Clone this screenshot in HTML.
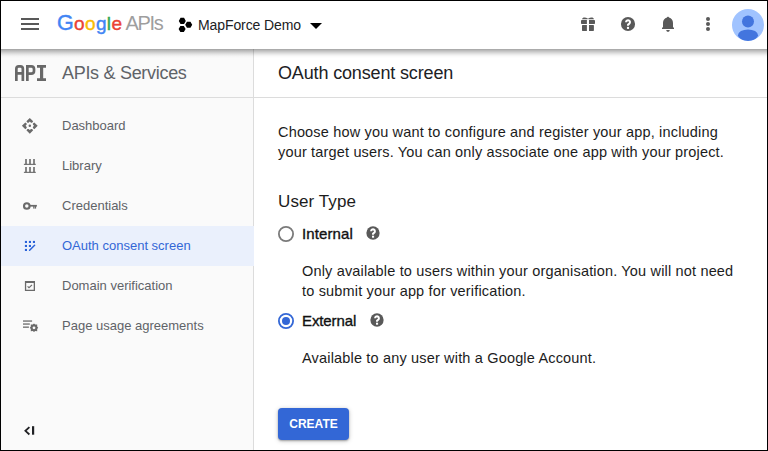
<!DOCTYPE html>
<html><head><meta charset="utf-8">
<style>
*{box-sizing:border-box;margin:0;padding:0}
html,body{width:768px;height:451px;overflow:hidden;background:#000}
body{font-family:"Liberation Sans",sans-serif;position:relative}
#frame{position:absolute;left:1px;top:1px;width:766px;height:449px;background:#fff;overflow:hidden}
.abs{position:absolute;white-space:nowrap}
#side{position:absolute;left:0;top:48px;width:253px;height:401px;background:#fafafa;border-right:1px solid #dcdcdc}
#hdr{position:absolute;left:0;top:0;width:766px;height:48px;background:#fff;z-index:5}
.hline{position:absolute;height:1px;background:#dcdcdc}
.nav{position:absolute;left:61px;font-size:13px;color:#5f6368;line-height:16px}
.body14{position:absolute;left:277px;font-size:14.5px;color:#1c1c1c;line-height:20px;white-space:nowrap;letter-spacing:0.17px}
svg{position:absolute;overflow:visible}
</style></head><body>
<div id="frame">
  <div id="side"></div>
  <div class="hline" style="left:0;top:96px;width:766px"></div>
  <div class="abs" style="left:0;top:48px;width:766px;height:9px;z-index:4;background:linear-gradient(to bottom,rgba(0,0,0,0.33) 0.5px,rgba(0,0,0,0.27) 1.5px,rgba(0,0,0,0.22) 2.5px,rgba(0,0,0,0.17) 3.5px,rgba(0,0,0,0.12) 4.5px,rgba(0,0,0,0.08) 5.5px,rgba(0,0,0,0.045) 6.5px,rgba(0,0,0,0.02) 7.5px,rgba(0,0,0,0.008) 8.5px)"></div>
  <div id="hdr">
    <!-- hamburger -->
    <div class="abs" style="left:20px;top:17px;width:18px;height:2px;background:#595959"></div>
    <div class="abs" style="left:20px;top:22px;width:18px;height:2px;background:#595959"></div>
    <div class="abs" style="left:20px;top:27px;width:18px;height:2px;background:#595959"></div>
    <!-- Google APIs -->
    <div class="abs" style="left:56px;top:10px;font-size:19px;line-height:24px;letter-spacing:0.35px;-webkit-text-stroke:0.4px"><span style="color:#4285f4;font-size:21.5px;letter-spacing:0.3px">G</span><span style="color:#ea4335">o</span><span style="color:#fbbc05">o</span><span style="color:#4285f4">g</span><span style="color:#34a853">l</span><span style="color:#ea4335">e</span></div>
    <div class="abs" style="left:124.5px;top:9.5px;font-size:20px;line-height:24px;letter-spacing:-1.3px;color:#9e9e9e">APIs</div>
    <!-- project icon -->
    <svg style="left:176.55px;top:15.2px" width="18" height="18" viewBox="0 0 18 18">
      <path fill="#000" d="M7.80 4.90L6.05 7.93L2.55 7.93L0.80 4.90L2.55 1.87L6.05 1.87Z M14.20 8.80L12.45 11.83L8.95 11.83L7.20 8.80L8.95 5.77L12.45 5.77Z M7.60 13.00L5.85 16.03L2.35 16.03L0.60 13.00L2.35 9.97L5.85 9.97Z"/>
    </svg>
    <div class="abs" style="left:197px;top:16px;font-size:14px;line-height:17px;color:#202124;letter-spacing:-0.1px">MapForce Demo</div>
    <svg style="left:309px;top:22px" width="12" height="6" viewBox="0 0 12 6"><path d="M0 0h12l-6 6z" fill="#000"/></svg>
    <!-- gift -->
    <svg style="left:575px;top:11px" width="24" height="24" viewBox="0 0 24 24">
      <path fill="#595959" d="M6 7.2C6.5 5 9.5 5 12 6.8C14.5 5 17.5 5 18 7.2Z"/>
      <rect x="5" y="8" width="14" height="4" rx="0.8" fill="#595959"/>
      <rect x="6" y="12.9" width="11.9" height="6" rx="0.6" fill="#595959"/>
      <rect x="10.9" y="7.5" width="2.1" height="12" fill="#fff"/>
    </svg>
    <!-- help -->
    <svg style="left:619px;top:15px" width="16" height="16" viewBox="-8 -8 16 16"><circle r="7.05" fill="#595959"/><path d="M-1.95 -1.85A1.95 1.95 0 1 1 1.4 -0.45L0.05 0.75V1.8" fill="none" stroke="#fff" stroke-width="2.05"/><rect x="-1.05" y="2.85" width="2.1" height="2.1" fill="#fff"/></svg>
    <!-- bell -->
    <svg style="left:655px;top:11px" width="24" height="24" viewBox="0 0 24 24"><path fill="#595959" d="M11 5.6C11 5 11.5 4.8 12 4.8S13 5 13 5.6C15.5 6.2 17 8.2 17 11V15L18 16.1V17.1H6V16.1L7 15V11C7 8.2 8.5 6.2 11 5.6Z M10.2 18.1H13.8A1.8 1.8 0 0 1 10.2 18.1Z"/></svg>
    <!-- kebab -->
    <svg style="left:703px;top:14px" width="10" height="18" viewBox="0 0 10 18">
      <circle cx="4" cy="4" r="2" fill="#595959"/><circle cx="4" cy="9" r="2" fill="#595959"/><circle cx="4" cy="14" r="2" fill="#595959"/>
    </svg>
    <svg style="left:731px;top:8px" width="32" height="32" viewBox="0 0 32 32">
      <defs><clipPath id="av"><circle cx="16" cy="16" r="16"/></clipPath></defs>
      <circle cx="16" cy="16" r="16" fill="#a0c3ff"/>
      <g clip-path="url(#av)">
      <circle cx="16" cy="12.5" r="6" fill="#4375de"/>
      <ellipse cx="16" cy="26.2" rx="10" ry="5.8" fill="#4375de"/>
      </g>
    </svg>
  </div>
  <!-- sidebar header API logo -->
  <svg style="left:-1px;top:-1px" width="60" height="90" viewBox="0 0 60 90">
    <g fill="none" stroke="#686868" stroke-width="2.7">
      <path d="M16.35 81V68.8Q16.35 66.35 18.8 66.35H20.4Q22.85 66.35 22.85 68.8V81 M16.35 73.4H22.85"/>
      <path d="M27.35 81V66.35H31.2Q34 66.35 34 69.1V70.9Q34 73.6 31.2 73.6H27.35"/>
      <path d="M37 66.4H46 M37 79.65H46"/>
    </g>
    <path d="M41.6 66.5V79.7" stroke="#686868" stroke-width="3.2"/>
  </svg>
  <div class="abs" style="left:61px;top:62px;font-size:18px;line-height:20px;color:#5f6368;letter-spacing:-0.3px">APIs &amp; Services</div>
  <div class="abs" style="left:277px;top:62px;font-size:18px;line-height:20px;color:#202124;letter-spacing:-0.15px">OAuth consent screen</div>

  <!-- nav -->
  <div class="abs" style="left:0;top:225px;width:253px;height:40px;background:#eaf0fc"></div>
  <!-- nav icons: coordinates in page space, offset by frame -->
  <svg style="left:-1px;top:-1px" width="60" height="340" viewBox="0 0 60 340">
    <g fill="#6a6a6a">
      <!-- dashboard center (29.8,125.8) -->
      <g transform="translate(29.8 125.8)">
        <path d="M0 -7.9L3.4 -4.5L2.3 -3.1H1.2L0 -4.2L-1.2 -3.1H-2.3L-3.4 -4.5Z"/>
        <path transform="rotate(90)" d="M0 -7.9L3.4 -4.5L2.3 -3.1H1.2L0 -4.2L-1.2 -3.1H-2.3L-3.4 -4.5Z"/>
        <path transform="rotate(180)" d="M0 -7.9L3.4 -4.5L2.3 -3.1H1.2L0 -4.2L-1.2 -3.1H-2.3L-3.4 -4.5Z"/>
        <path transform="rotate(270)" d="M0 -7.9L3.4 -4.5L2.3 -3.1H1.2L0 -4.2L-1.2 -3.1H-2.3L-3.4 -4.5Z"/>
        <circle r="1.25"/>
      </g>
      <!-- library origin (18,154) -->
      <g transform="translate(18 154)">
        <rect x="7.2" y="5" width="1.6" height="5.5"/><rect x="11.2" y="5" width="1.6" height="5.5"/><rect x="15.2" y="5" width="1.6" height="5.5"/>
        <rect x="5.9" y="9.8" width="11.9" height="1.1"/>
        <rect x="7.2" y="13" width="1.6" height="5.5"/><rect x="11.2" y="13" width="1.6" height="5.5"/><rect x="15.2" y="13" width="1.6" height="5.5"/>
        <rect x="5.9" y="17.8" width="11.9" height="1.1"/>
      </g>
      <!-- key origin (18,194) -->
      <g transform="translate(18 194)">
        <circle cx="8.8" cy="12" r="2.8" fill="none" stroke="#6a6a6a" stroke-width="2.1"/>
        <rect x="11.8" y="10.9" width="7.1" height="1.7"/>
        <rect x="15.2" y="12" width="1.3" height="2.6"/><rect x="16.8" y="12" width="1.3" height="2.6"/>
      </g>
      <!-- domain origin (18,274) -->
      <g transform="translate(18 274)">
        <path d="M6.9 6.9H17V17H6.9Z M8.2 9V15.7H15.7V9Z" fill-rule="evenodd"/>
        <path d="M9.6 12.3L11 13.7L14 10.8" fill="none" stroke="#6a6a6a" stroke-width="1.1"/>
      </g>
      <!-- page usage origin (18,314) -->
      <g transform="translate(18 314)">
        <rect x="5" y="6.4" width="9.1" height="1.3"/>
        <rect x="5" y="9.4" width="6.8" height="1.3"/>
        <rect x="5" y="12.5" width="5.9" height="1.3"/>
        <g transform="translate(16 13.8)">
          <path d="M0 -4.2L1.2 -3.2L3.2 -3.4L3.2 -1.2L4.2 0L3.2 1.2L3.2 3.4L1.2 3.2L0 4.2L-1.2 3.2L-3.2 3.4L-3.2 1.2L-4.2 0L-3.2 -1.2L-3.2 -3.4L-1.2 -3.2Z M0 -1.4A1.4 1.4 0 1 0 0 1.4A1.4 1.4 0 1 0 0 -1.4Z" fill-rule="evenodd"/>
        </g>
      </g>
    </g>
    <!-- oauth origin (18,234) -->
    <g transform="translate(18 234)" fill="#2a62d8">
      <rect x="6.9" y="6.9" width="2.1" height="2.1"/><rect x="10.9" y="6.9" width="2.1" height="2.1"/><rect x="14.9" y="6.9" width="2.1" height="2.1"/>
      <rect x="6.9" y="10.9" width="2.1" height="2.1"/><rect x="10.9" y="10.9" width="2.1" height="2.1"/>
      <rect x="6.9" y="14.9" width="2.1" height="2.1"/>
      <path d="M11.6 16.3L16.6 11.3" stroke="#2a62d8" stroke-width="1.5" stroke-linecap="round"/>
    </g>
    <!-- collapse -->
    <path d="M29.4 427.1L25.4 430.8L29.4 434.5" fill="none" stroke="#202124" stroke-width="1.8"/><rect x="32" y="426.2" width="2.2" height="8.5" fill="#202124"/>
  </svg>
  
  <div class="nav abs" style="top:117px">Dashboard</div>
  <div class="nav abs" style="top:157px">Library</div>
  <div class="nav abs" style="top:197px">Credentials</div>
  <div class="nav abs" style="top:237px;color:#3367d6">OAuth consent screen</div>
  <div class="nav abs" style="top:277px">Domain verification</div>
  <div class="nav abs" style="top:317px">Page usage agreements</div>

  <!-- content -->
  <div class="body14" style="top:120.5px">Choose how you want to configure and register your app, including<br>your target users. You can only associate one app with your project.</div>
  <div class="abs" style="left:277px;top:190px;font-size:17px;line-height:22px;color:#1c1c1c;letter-spacing:0.1px">User Type</div>
  <svg style="left:276px;top:224px" width="18" height="18" viewBox="0 0 18 18"><circle cx="9" cy="9" r="7.1" fill="none" stroke="#7a7a7a" stroke-width="1.8"/></svg>
  <div class="abs" style="left:301px;top:224px;font-size:15px;line-height:17px;color:#111;-webkit-text-stroke:0.35px;letter-spacing:0.1px">Internal</div>
  <svg style="left:364px;top:224px" width="16" height="16" viewBox="-8 -8 16 16"><circle r="6.65" fill="#595959"/><path d="M-1.9 -1.8A1.9 1.9 0 1 1 1.35 -0.45L0.05 0.7V1.7" fill="none" stroke="#fff" stroke-width="2"/><rect x="-1" y="2.7" width="2.1" height="2" fill="#fff"/></svg>
  <div class="body14" style="left:301px;top:259.5px">Only available to users within your organisation. You will not need<br>to submit your app for verification.</div>
  <svg style="left:276px;top:311px" width="18" height="18" viewBox="0 0 18 18"><circle cx="9" cy="9" r="7.1" fill="none" stroke="#3367d6" stroke-width="1.8"/><circle cx="9" cy="9" r="4" fill="#3367d6"/></svg>
  <div class="abs" style="left:301px;top:311px;font-size:15px;line-height:17px;color:#111;-webkit-text-stroke:0.35px;letter-spacing:-0.1px">External</div>
  <svg style="left:368px;top:311px" width="16" height="16" viewBox="-8 -8 16 16"><circle r="6.65" fill="#595959"/><path d="M-1.9 -1.8A1.9 1.9 0 1 1 1.35 -0.45L0.05 0.7V1.7" fill="none" stroke="#fff" stroke-width="2"/><rect x="-1" y="2.7" width="2.1" height="2" fill="#fff"/></svg>
  <div class="body14" style="left:301px;top:346.5px">Available to any user with a Google Account.</div>
  <div class="abs" style="left:277px;top:407px;width:71px;height:32px;background:#3367d6;border-radius:4px;box-shadow:0 1px 2px rgba(0,0,0,.3),0 1px 4px 1px rgba(0,0,0,.13);color:#fff;font-weight:bold;font-size:12px;line-height:32px;text-align:center">CREATE</div>
</div>
</body></html>
